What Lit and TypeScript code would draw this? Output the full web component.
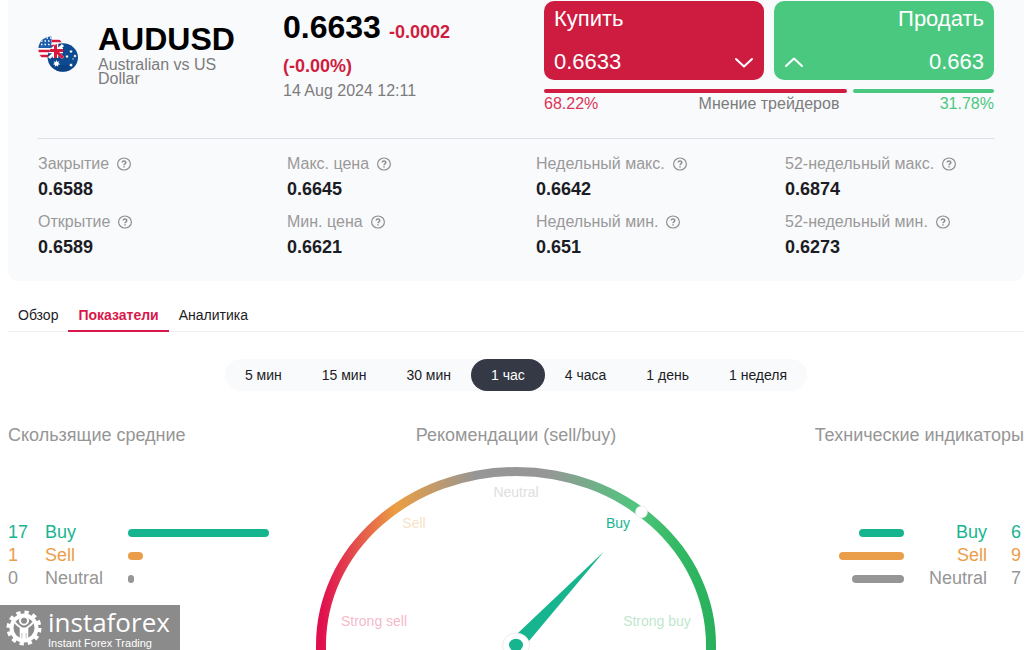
import { LitElement, html, css, svg } from "lit";
import { customElement, state, property } from "lit/decorators.js";
import { classMap } from "lit/directives/class-map.js";
import { styleMap } from "lit/directives/style-map.js";

type Tone = "buy" | "sell" | "neutral";
interface Signal {
  tone: Tone;
  name: string;
  count: number;
  bar: number;
}

const STATS = [
  ["Закрытие", "0.6588"],
  ["Макс. цена", "0.6645"],
  ["Недельный макс.", "0.6642"],
  ["52-недельный макс.", "0.6874"],
  ["Открытие", "0.6589"],
  ["Мин. цена", "0.6621"],
  ["Недельный мин.", "0.651"],
  ["52-недельный мин.", "0.6273"],
];
const OPINION = { buy: 68.22, sell: 31.78 };
const TABS = ["Обзор", "Показатели", "Аналитика"];
const PERIODS = ["5 мин", "15 мин", "30 мин", "1 час", "4 часа", "1 день", "1 неделя"];
const AVERAGES: Signal[] = [
  { tone: "buy", name: "Buy", count: 17, bar: 141 },
  { tone: "sell", name: "Sell", count: 1, bar: 15 },
  { tone: "neutral", name: "Neutral", count: 0, bar: 6 },
];
const INDICATORS: Signal[] = [
  { tone: "buy", name: "Buy", count: 6, bar: 45 },
  { tone: "sell", name: "Sell", count: 9, bar: 65 },
  { tone: "neutral", name: "Neutral", count: 7, bar: 52 },
];

@customElement("signal-list")
class SignalList extends LitElement {
  @property({ attribute: false }) items: Signal[] = [];
  @property({ type: Boolean, reflect: true }) mirrored = false;

  static styles = css`
    :host { display: block; }
    .list { list-style: none; margin: 0; padding: 0; }
    .row {
      display: grid;
      grid-template-columns: 37px 83px 1fr;
      align-items: center;
      font-size: 18px;
      line-height: 23px;
    }
    .bar { height: 8px; border-radius: 4px; background: currentColor; }
    .buy { color: #17b58f; }
    .sell { color: #eb9e4a; }
    .neutral { color: #969696; }
    :host([mirrored]) .row { grid-template-columns: 1fr 83px 34px; text-align: right; padding-right: 3px; }
    :host([mirrored]) .bar { order: -1; justify-self: end; }
    :host([mirrored]) .count { order: 1; }
  `;

  render() {
    return html`<ul class="list">
      ${this.items.map(
        (s) => html`<li class="row ${s.tone}">
          <span class="count">${s.count}</span>
          <span>${s.name}</span>
          <span class="bar" style=${styleMap({ width: `${s.bar}px` })}></span>
        </li>`
      )}
    </ul>`;
  }
}

@customElement("signal-gauge")
class SignalGauge extends LitElement {
  static styles = css`
    :host { display: block; }
    .dial { display: block; width: 100%; }
    .mark { font-size: 14px; text-anchor: middle; }
    .soft { opacity: 0.3; }
  `;

  render() {
    return html`<svg class="dial" viewBox="0 0 400 190" role="img" aria-label="Buy">
      <defs>
        <linearGradient id="scale" gradientUnits="userSpaceOnUse" x1="0" y1="0" x2="400" y2="0">
          <stop offset="0.015" stop-color="#e0104f" />
          <stop offset="0.1" stop-color="#e4504c" />
          <stop offset="0.2" stop-color="#eb9e42" />
          <stop offset="0.4" stop-color="#969696" />
          <stop offset="0.58" stop-color="#969696" />
          <stop offset="0.8" stop-color="#4fc67d" />
          <stop offset="0.9" stop-color="#34b964" />
          <stop offset="1" stop-color="#28b05c" />
        </linearGradient>
      </defs>
      <path fill="url(#scale)" fill-rule="evenodd"
        d="M0 190V185A200 178 0 0 1 400 185V190H390V185A190 169 0 0 0 10 185V190Z" />
      <circle cx="325.500" cy="52" r="6" fill="#fff" stroke="#e4e4e4" stroke-width="0.6" />
      <text class="mark soft" x="200" y="37" fill="#969696">Neutral</text>
      <text class="mark soft" x="98" y="68" fill="#eb9e42">Sell</text>
      <text class="mark" x="302" y="68" fill="#17b58f">Buy</text>
      <text class="mark soft" x="58" y="166" fill="#e0104f">Strong sell</text>
      <text class="mark soft" x="341" y="166" fill="#28b05c">Strong buy</text>
      <path d="M288 91.500L202 173L213 181Z" fill="#17b58f" />
      <ellipse cx="200" cy="185" rx="13.500" ry="12" fill="#fff" stroke="#e4e4e4" stroke-width="0.700" />
      <ellipse cx="200" cy="185" rx="7" ry="6.300" fill="#17b58f" />
    </svg>`;
  }
}

@customElement("app-root")
class AppRoot extends LitElement {
  @state() tab = 1;
  @state() period = 3;

  static styles = css`
    :host {
      display: block;
      position: relative;
      padding: 0 4px 0 8px;
      font-family: "Liberation Sans", Arial, sans-serif;
      color: #1c1c24;
      background: #fff;
    }
    button { font: inherit; color: inherit; border: 0; background: none; padding: 0; cursor: pointer; }
    .card { background: #f9fafc; border-radius: 0 0 10px 10px; padding: 0 30px 23px; }
    .head {
      display: grid;
      grid-template-columns: 40px 145px minmax(0, 1fr) 450px;
      column-gap: 20px;
      min-height: 138px;
      border-bottom: 1px solid #dcdfe7;
    }
    .flags { display: block; width: 40px; height: 36px; margin-top: 36px; }
    .ident { padding-top: 22px; }
    .pair { margin: 0; font-size: 32px; line-height: 34px; color: #000; }
    .full { margin: 2px 0 0; font-size: 16px; line-height: 14px; color: #7c7c7c; }
    .price { padding: 10px 40px 0 20px; }
    .last { margin: 0; font-weight: bold; line-height: 34px; font-size: 18px; color: #d01c40; }
    .value { margin-right: 3px; font-size: 32px; color: #000; }
    .date { display: block; font-size: 16px; line-height: 16px; color: #7c7c7c; white-space: nowrap; }
    .quotes { padding-top: 1px; }
    .deals { display: grid; grid-template-columns: 1fr 1fr; gap: 10px; }
    .deal {
      display: grid;
      grid-template-columns: auto auto;
      justify-content: space-between;
      align-content: space-between;
      align-items: center;
      height: 79px;
      padding: 6px 10px;
      border-radius: 10px;
      font-size: 22px;
      line-height: 24px;
      text-align: left;
      color: #fff;
      background: #ce1c40;
    }
    .deal.up { background: #4bc87f; text-align: right; }
    .action { grid-column: 1 / -1; }
    .chevron { display: block; width: 20px; height: 12px; }
    .split { display: flex; gap: 6px; margin-top: 9px; }
    .share { height: 4px; border-radius: 2px; background: #d01c40; }
    .share.up { background: #4bc87f; }
    .opinion { display: flex; justify-content: space-between; font-size: 16px; line-height: 22px; color: #7c7c7c; }
    .down-text { color: #d9365a; }
    .up-text { color: #4bc87f; }
    .stats { display: grid; grid-template-columns: repeat(4, minmax(0, 1fr)); gap: 12px 40px; margin: 15px 0 0; }
    .term { display: flex; align-items: center; gap: 8px; font-size: 16px; line-height: 20px; color: #999; white-space: nowrap; }
    .help { display: block; width: 14px; height: 14px; }
    .help-icon { display: block; }
    .figure { margin: 4px 0 0; font-size: 18px; line-height: 22px; font-weight: bold; }
    .tabs { display: flex; margin-top: 18px; font-size: 14px; border-bottom: 1px solid #eef1f6; }
    .tab { height: 33px; margin-bottom: -1px; padding: 0 10px; border-bottom: 2px solid transparent; }
    .tab.on { font-weight: bold; color: #d9174a; border-color: #d9174a; }
    .periods { display: flex; width: fit-content; margin: 27px auto 0; border-radius: 16px; background: #f9fafc; font-size: 14px; }
    .period { height: 32px; padding: 0 20px; border-radius: 16px; }
    .period.on { background: #353945; color: #fff; }
    .board { display: grid; grid-template-columns: 1fr 400px 1fr; margin-top: 32px; }
    .title { margin: 0; font-size: 18px; line-height: 24px; font-weight: normal; color: #969696; white-space: nowrap; }
    .center .title { text-align: center; }
    .right .title { text-align: right; }
    .list { margin-top: 74px; }
    .dial { margin-top: 13px; }
    .brand {
      position: absolute;
      left: 0;
      bottom: 0;
      display: flex;
      align-items: center;
      gap: 6px;
      width: 180px;
      height: 45px;
      padding-left: 6px;
      box-sizing: border-box;
      background: #8b8b8b;
      color: #fff;
      text-decoration: none;
      white-space: nowrap;
    }
    .gear { flex: none; width: 36px; height: 36px; }
    .word { display: block; font: 400 26px/30px "Open Sans", "Noto Sans", sans-serif; }
    .slogan { display: block; font-size: 11px; line-height: 12px; }
  `;

  flags() {
    return html`<svg class="flags" viewBox="0 0 40 36" aria-hidden="true">
      <defs>
        <clipPath id="us"><circle cx="13" cy="13" r="12.600" /></clipPath>
        <clipPath id="au"><ellipse cx="24.800" cy="21.500" rx="15.200" ry="14.300" /></clipPath>
      </defs>
      <g clip-path="url(#us)">
        <rect width="28" height="28" fill="#fff" />
        <path d="M0 5H28M0 10H28M0 15H28M0 20H28" stroke="#d8183c" stroke-width="2.600" />
        <rect width="13.500" height="12" fill="#1b5fae" />
        <path d="M3 5H14M3 8.500H14M5 2H14" stroke="#fff" stroke-width="1.300" stroke-dasharray="1.500 2" />
      </g>
      <g clip-path="url(#au)">
        <rect x="9" y="7" width="32" height="30" fill="#0d4a90" />
        <path d="M9 29H41V37H9Z" fill="#0a3a78" opacity="0.5" />
        <path d="M10 8H25V22H10Z" fill="#17407f" />
        <path d="M11 8L25 22M25 9L11 22" stroke="#fff" stroke-width="3" />
        <path d="M17.500 7V22M10 14.500H25" stroke="#fff" stroke-width="5.500" />
        <path d="M17.500 7V22M10 14.500H25M19 16L25 22" stroke="#d8183c" stroke-width="3" />
        ${[
          [18.5, 27.5, 3.6],
          [33, 15.5, 1.8],
          [29, 20.5, 1.7],
          [37, 20, 1.7],
          [35, 23, 0.9],
          [33, 29, 1.9],
        ].map(
          ([x, y, r]) => svg`<path fill="#fff" transform="translate(${x} ${y}) scale(${r})"
            d="M0-1L.25-.45 .8-.62 .52-.12 1 .22 .42 .34 .45 .9 0 .55-.45 .9-.42 .34-1 .22-.52-.12-.8-.62-.25-.45Z" />`
        )}
      </g>
    </svg>`;
  }

  chevron(up: boolean) {
    return html`<svg class="chevron" viewBox="0 0 20 12" fill="none" stroke="#fff" stroke-width="2"
      stroke-linecap="round" stroke-linejoin="round" aria-hidden="true">
      <path d=${up ? "M2 10L10 2.500L18 10" : "M2 3L10 10.500L18 3"} />
    </svg>`;
  }

  render() {
    return html`
      <section class="card">
        <header class="head">
          ${this.flags()}
          <div class="ident">
            <h1 class="pair">AUDUSD</h1>
            <p class="full">Australian vs US Dollar</p>
          </div>
          <div class="price">
            <p class="last"><span class="value">0.6633</span> <span>-0.0002</span> <span>(-0.00%)</span></p>
            <time class="date" datetime="2024-08-14T12:11">14 Aug 2024 12:11</time>
          </div>
          <div class="quotes">
            <div class="deals">
              <button class="deal" type="button">
                <span class="action">Купить</span><span>0.6633</span>${this.chevron(false)}
              </button>
              <button class="deal up" type="button">
                <span class="action">Продать</span>${this.chevron(true)}<span>0.663</span>
              </button>
            </div>
            <div class="split">
              <span class="share" style=${styleMap({ flex: `${OPINION.buy}` })}></span>
              <span class="share up" style=${styleMap({ flex: `${OPINION.sell}` })}></span>
            </div>
            <div class="opinion">
              <span class="down-text">${OPINION.buy}%</span><span>Мнение трейдеров</span><span class="up-text">${OPINION.sell}%</span>
            </div>
          </div>
        </header>
        <dl class="stats">
          ${STATS.map(
            ([name, value]) => html`<div>
              <dt class="term">
                ${name}
                <button class="help" type="button" aria-label=${name}>
                  <svg class="help-icon" width="14" height="14" viewBox="0 0 14 14" fill="none" stroke="#8e8e8e">
                    <ellipse cx="7" cy="7" rx="6.400" ry="6" stroke-width="1.200" />
                    <path d="M5.200 5.600C5.200 3.400 8.800 3.400 8.800 5.500C8.800 6.900 7 6.700 7 8.300M7 9.300V10.500" stroke-width="1.500" />
                  </svg>
                </button>
              </dt>
              <dd class="figure">${value}</dd>
            </div>`
          )}
        </dl>
      </section>

      <nav class="tabs">
        ${TABS.map(
          (name, i) => html`<button type="button" class=${classMap({ tab: true, on: i === this.tab })}
            @click=${() => (this.tab = i)}>${name}</button>`
        )}
      </nav>

      <div class="periods">
        ${PERIODS.map(
          (name, i) => html`<button type="button" class=${classMap({ period: true, on: i === this.period })}
            aria-pressed=${i === this.period} @click=${() => (this.period = i)}>${name}</button>`
        )}
      </div>

      <main class="board">
        <section>
          <h2 class="title">Скользящие средние</h2>
          <signal-list class="list" .items=${AVERAGES}></signal-list>
        </section>
        <section class="center">
          <h2 class="title">Рекомендации (sell/buy)</h2>
          <signal-gauge class="dial"></signal-gauge>
        </section>
        <section class="right">
          <h2 class="title">Технические индикаторы</h2>
          <signal-list class="list" mirrored .items=${INDICATORS}></signal-list>
        </section>
      </main>

      <a class="brand" href="#">
        <svg class="gear" viewBox="0 0 36 36" fill="none" stroke="#fff" aria-hidden="true">
          <circle cx="18" cy="18" r="15.500" stroke-width="4" stroke-dasharray="4.200 3.916" />
          <circle cx="18" cy="18" r="12.500" stroke-width="4" />
          <path d="M9 12.500C11 15.500 13 16 14.700 17.500V31H17.200V23H18.800V31H21.300V17.500C23 16 25 15.500 27 12.500"
            stroke-width="2" />
          <path d="M14.700 17.500H21.300V23H14.700Z" fill="#fff" stroke="none" />
          <circle cx="18" cy="10.500" r="5" fill="#fff" stroke="none" />
          <circle cx="18" cy="10.800" r="3" fill="#8b8b8b" stroke="none" />
        </svg>
        <span><span class="word">instaforex</span><span class="slogan">Instant Forex Trading</span></span>
      </a>
    `;
  }
}
